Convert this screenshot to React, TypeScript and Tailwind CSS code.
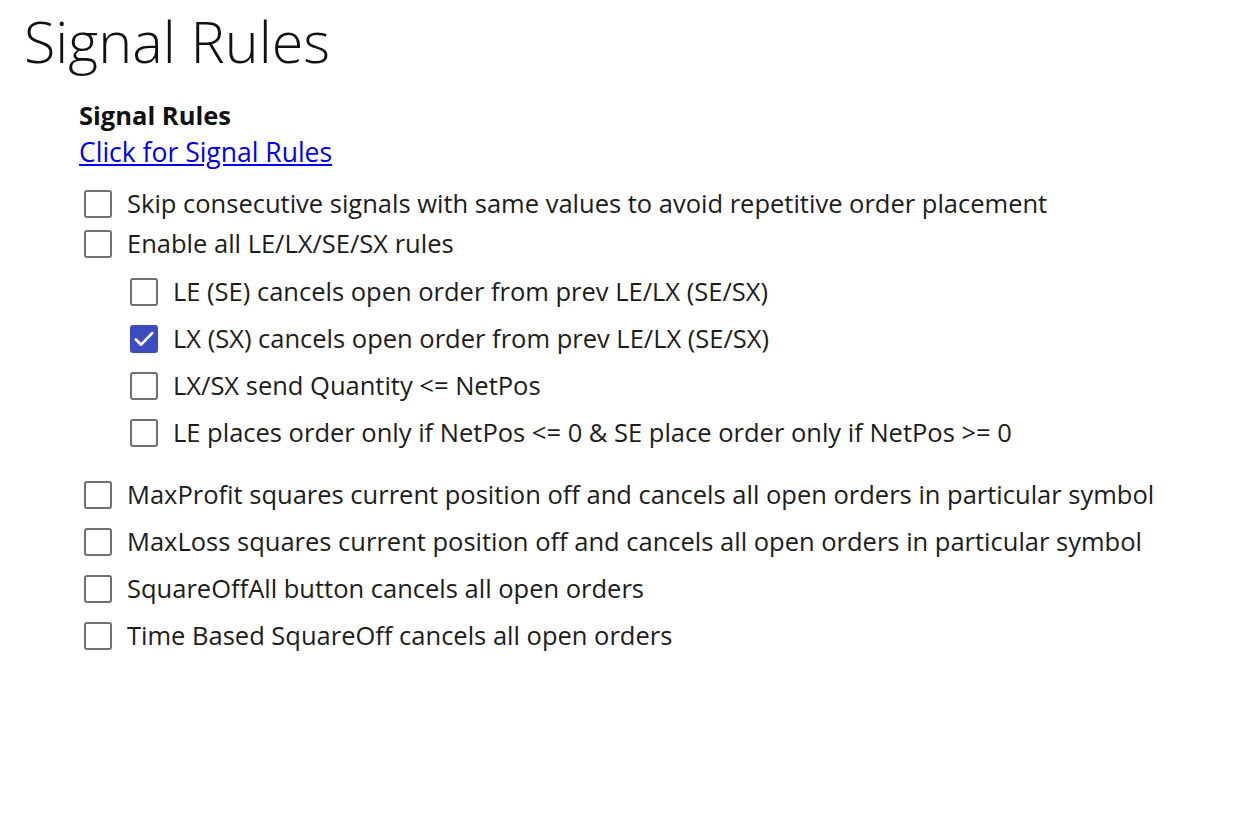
import { useState } from "react";

type Rule = { id: string; label: string; checked?: boolean };

const topRules: Rule[] = [
  { id: "skip", label: "Skip consecutive signals with same values to avoid repetitive order placement" },
  { id: "enable", label: "Enable all LE/LX/SE/SX rules" },
];

const subRules: Rule[] = [
  { id: "le", label: "LE (SE) cancels open order from prev LE/LX (SE/SX)" },
  { id: "lx", label: "LX (SX) cancels open order from prev LE/LX (SE/SX)", checked: true },
  { id: "qty", label: "LX/SX send Quantity <= NetPos" },
  { id: "netpos", label: "LE places order only if NetPos <= 0 & SE place order only if NetPos >= 0" },
];

const bottomRules: Rule[] = [
  { id: "maxprofit", label: "MaxProfit squares current position off and cancels all open orders in particular symbol" },
  { id: "maxloss", label: "MaxLoss squares current position off and cancels all open orders in particular symbol" },
  { id: "sqoff", label: "SquareOffAll button cancels all open orders" },
  { id: "time", label: "Time Based SquareOff cancels all open orders" },
];

function CheckRow({ rule, value, onToggle }: { rule: Rule; value: boolean; onToggle: () => void }) {
  return (
    <label className="flex items-center gap-[15px] cursor-pointer select-none">
      <span
        onClick={onToggle}
        className={
          value
            ? "w-[28px] h-[28px] rounded-[3px] bg-[#3d4dbf] flex items-center justify-center shrink-0"
            : "w-[28px] h-[28px] rounded-[3px] border-2 border-[#707070] bg-white shrink-0"
        }
      >
        {value && (
          <svg width="24" height="24" viewBox="0 0 20 20" fill="none">
            <path d="M3.2 10.4l4.4 4.3 9.2-9.6" stroke="white" strokeWidth="2.3" strokeLinecap="round" strokeLinejoin="round" />
          </svg>
        )}
      </span>
      <span className="text-[25.5px] text-[#1c1c1c] leading-none">{rule.label}</span>
    </label>
  );
}

export default function App() {
  const all = [...topRules, ...subRules, ...bottomRules];
  const [state, setState] = useState<Record<string, boolean>>(
    Object.fromEntries(all.map((r) => [r.id, !!r.checked]))
  );
  const toggle = (id: string) => setState((s) => ({ ...s, [id]: !s[id] }));

  return (
    <div
      className="min-h-[821px] w-full bg-white text-black"
      style={{ fontFamily: '"Open Sans", "Noto Sans", sans-serif' }}
    >
      <h1 className="pl-[24px] pt-[9px] text-[57.5px] font-light leading-[64px] text-[#111]">Signal Rules</h1>
      <div className="pl-[79px] pt-[27px]">
        <div className="text-[25.5px] font-bold leading-[30px] text-[#111]">Signal Rules</div>
        <a href="#" className="mt-[4px] inline-block text-[26.5px] leading-[36px] text-[#0000ee] underline">
          Click for Signal Rules
        </a>
        <div className="pl-[5px] pt-[20px] flex flex-col">
          <div className="flex flex-col gap-[12px]">
            {topRules.map((r) => (
              <CheckRow key={r.id} rule={r} value={state[r.id]} onToggle={() => toggle(r.id)} />
            ))}
          </div>
          <div className="pl-[46px] pt-[20px] flex flex-col gap-[19px]">
            {subRules.map((r) => (
              <CheckRow key={r.id} rule={r} value={state[r.id]} onToggle={() => toggle(r.id)} />
            ))}
          </div>
          <div className="pt-[34px] flex flex-col gap-[19px]">
            {bottomRules.map((r) => (
              <CheckRow key={r.id} rule={r} value={state[r.id]} onToggle={() => toggle(r.id)} />
            ))}
          </div>
        </div>
      </div>
    </div>
  );
}
